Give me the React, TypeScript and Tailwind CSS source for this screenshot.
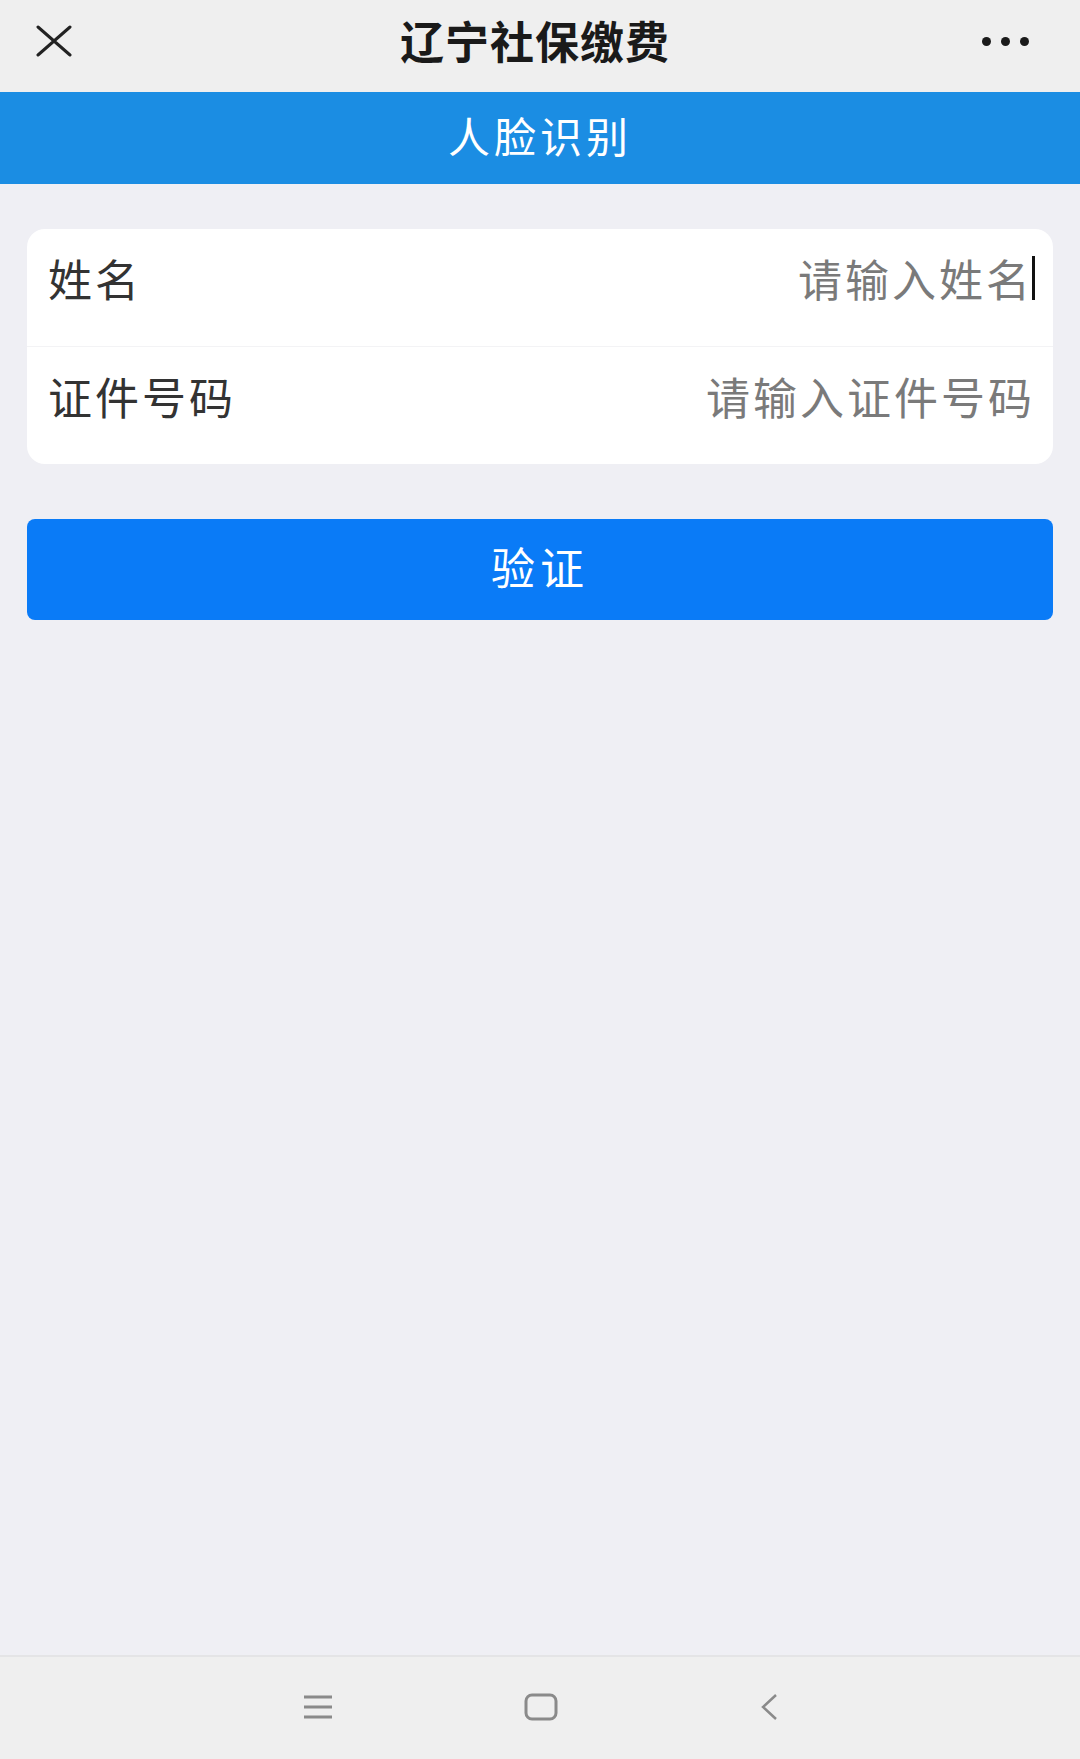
import { useState } from "react";

const cjk = "font-['Noto_Sans_CJK_SC','Noto_Sans',sans-serif]";

function TopBar() {
  return (
    <div className="relative flex h-[92px] items-center justify-center bg-[#efefef]">
      <button className="absolute left-[36px] top-[25px]">
        <svg width="36" height="32" viewBox="0 0 36 32">
          <path d="M2 2 L34 30 M34 2 L2 30" stroke="#222" strokeWidth="3" strokeLinecap="round" fill="none" />
        </svg>
      </button>
      <h1 className="ml-[-10px] mt-[-12px] text-[44px] font-bold tracking-[1px] text-[#1a1a1a]">辽宁社保缴费</h1>
      <div className="absolute right-[51px] top-[37px] flex gap-[10px]">
        <span className="h-[9px] w-[9px] rounded-full bg-[#1a1a1a]" />
        <span className="h-[9px] w-[9px] rounded-full bg-[#1a1a1a]" />
        <span className="h-[9px] w-[9px] rounded-full bg-[#1a1a1a]" />
      </div>
    </div>
  );
}

function Field({ label, placeholder, caret }: { label: string; placeholder: string; caret?: boolean }) {
  return (
    <div className="flex h-[117px] items-center justify-between pb-[20px] pl-[21px] pr-[18px]">
      <span className="text-[44px] tracking-[3px] text-[#333]">{label}</span>
      <span className="flex items-center text-[44px] tracking-[3px] text-[#7a7a7a]">
        {placeholder}
        {caret && <span className="ml-[-1px] h-[44px] w-[3px] bg-[#111]" />}
      </span>
    </div>
  );
}

export default function App() {
  const [verified, setVerified] = useState(false);

  return (
    <div className={`flex h-[1759px] w-[1080px] flex-col bg-[#efeff4] ${cjk}`}>
      <TopBar />
      <div className="flex h-[92px] items-center justify-center bg-[#1b8de3]">
        <span className="mt-[-8px] text-[42px] tracking-[4px] text-white">人脸识别</span>
      </div>

      <div className="flex-1 px-[27px] pt-[45px]">
        <div className="overflow-hidden rounded-[18px] bg-white">
          <Field label="姓名" placeholder="请输入姓名" caret />
          <div className="h-px bg-[#f3f3f5]" />
          <Field label="证件号码" placeholder="请输入证件号码" />
        </div>

        <button
          onClick={() => setVerified(!verified)}
          className="mt-[55px] flex h-[101px] w-full items-center justify-center rounded-[8px] bg-[#0a7bf7] pb-[8px] text-[44px] tracking-[5px] text-white"
        >
          验证
        </button>
      </div>

      <div className="flex h-[104px] items-center justify-center border-t-2 border-[#e4e4e6] bg-[#efefef] pb-[2px]">
        <svg width="32" height="24" viewBox="0 0 32 24" className="mr-[190px]">
          <path d="M2 2 H30 M2 12 H30 M2 22 H30" stroke="#8a8a8a" strokeWidth="3" fill="none" />
        </svg>
        <svg width="34" height="28" viewBox="0 0 34 28" className="mr-[201px]">
          <rect x="2" y="2" width="30" height="24" rx="6" stroke="#8a8a8a" strokeWidth="3" fill="none" />
        </svg>
        <svg width="20" height="28" viewBox="0 0 20 28">
          <path d="M17 2 L4 14 L17 26" stroke="#8a8a8a" strokeWidth="2.5" fill="none" />
        </svg>
      </div>
    </div>
  );
}
